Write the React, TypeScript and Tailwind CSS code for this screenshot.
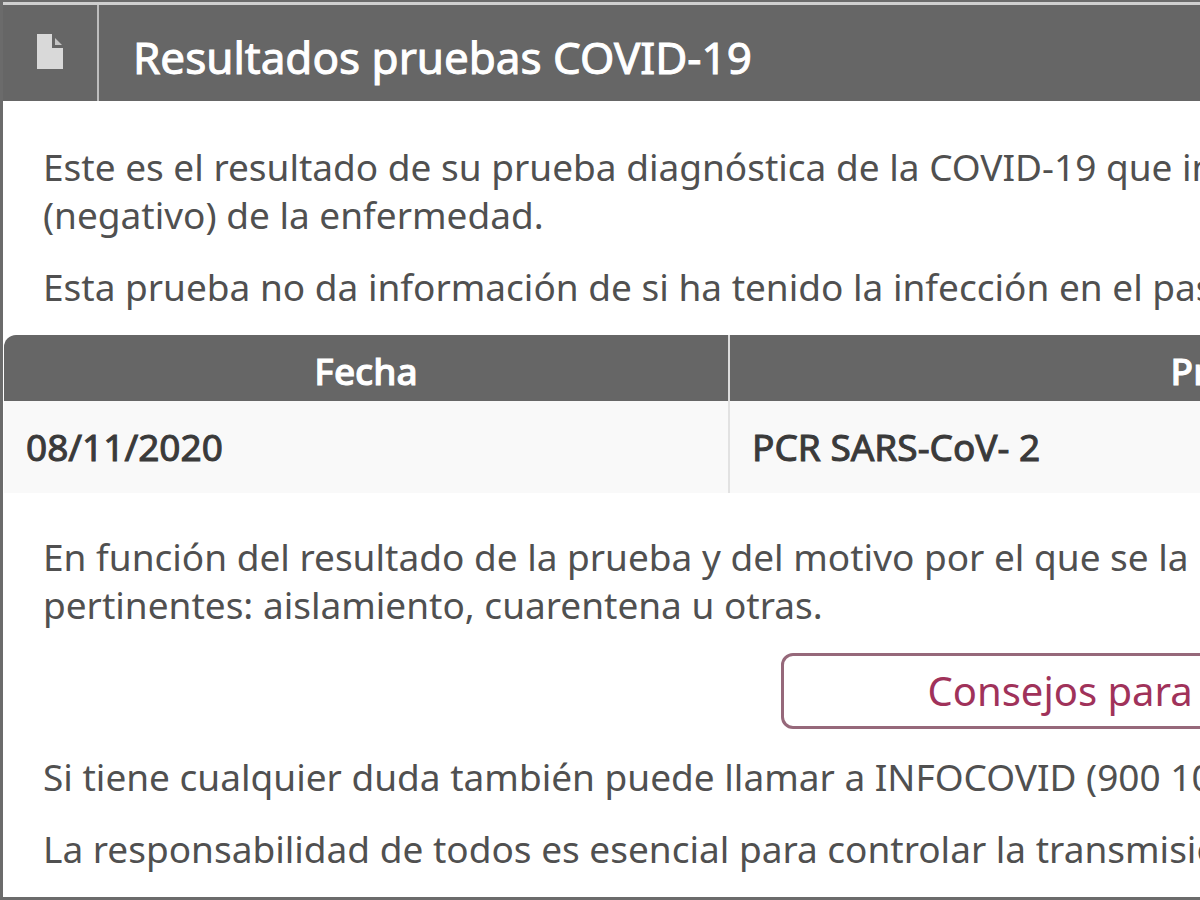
const results = [{ date: '08/11/2020', test: 'PCR SARS-CoV- 2' }];

function DocumentIcon() {
  return (
    <svg width="26" height="35" viewBox="0 0 26 35" aria-hidden="true">
      <path d="M0 0H15V14H26V35H0Z" fill="#d9d9d9" />
      <path d="M18 4L25 11H18Z" fill="#c4c4c4" />
    </svg>
  );
}

function ResultsTable() {
  return (
    <div className="pl-px">
      <table className="w-full table-fixed border-separate border-spacing-0 text-[37px] leading-[48px]">
        <thead>
          <tr className="text-white [-webkit-text-stroke:1px_white]">
            <th className="w-[726px] rounded-tl-xl border-r-2 border-[#dcdcdc] bg-[#666666] pt-3 pb-1.5 font-medium">Fecha</th>
            <th className="w-[1008px] bg-[#666666] pt-3 pb-1.5 font-medium">Prueba</th>
            <th className="bg-[#666666]"></th>
          </tr>
        </thead>
        <tbody>
          {results.map((result) => (
            <tr key={result.date} className="bg-[#f9f9f9] text-[#3a3a3a] [-webkit-text-stroke:1px_#3a3a3a]">
              <td className="border-r-2 border-[#e2e2e2] px-[22px] py-[22px]">{result.date}</td>
              <td className="px-[22px] py-[22px]">{result.test}</td>
              <td></td>
            </tr>
          ))}
        </tbody>
      </table>
    </div>
  );
}

export default function App() {
  return (
    <div className="overflow-hidden bg-white font-['Noto_Sans','Open_Sans',sans-serif] text-[#505050]">
      {/* The panel is wider than the window and runs off its right edge */}
      <section className="w-[200%] border-t-2 border-b-3 border-l-3 border-[#6b6b6b]">
        <header className="flex border-t-3 border-[#cfcfcf] bg-[#666666]">
          <div className="flex w-24 items-center justify-center border-r-2 border-[#bdbdbd] pb-1">
            <DocumentIcon />
          </div>
          <h1 className="px-[34px] pt-5 pb-3 text-[44px] leading-[64px] text-white [-webkit-text-stroke:1px_white]">
            Resultados pruebas COVID-19
          </h1>
        </header>

        <div className="space-y-6 px-10 pt-[42px] pb-6 text-[37px] leading-[48px]">
          <p>
            Este es el resultado de su prueba diagnóstica de la COVID-19 que in
            <br />
            (negativo) de la enfermedad.
          </p>
          <p>Esta prueba no da información de si ha tenido la infección en el pas</p>
        </div>

        <ResultsTable />

        <div className="space-y-6 px-10 pt-10 pb-6 text-[37px] leading-[48px]">
          <p>
            En función del resultado de la prueba y del motivo por el que se la h
            <br />
            pertinentes: aislamiento, cuarentena u otras.
          </p>
          <button
            type="button"
            className="mx-auto block w-[842px] rounded-xl border-3 border-[#96687a] px-36 py-[11px] text-left text-[40px] leading-[48px] text-[#a0325a]"
          >
            Consejos para
          </button>
          <p>Si tiene cualquier duda también puede llamar a INFOCOVID (900 10</p>
          <p>La responsabilidad de todos es esencial para controlar la transmisió</p>
        </div>
      </section>
    </div>
  );
}
